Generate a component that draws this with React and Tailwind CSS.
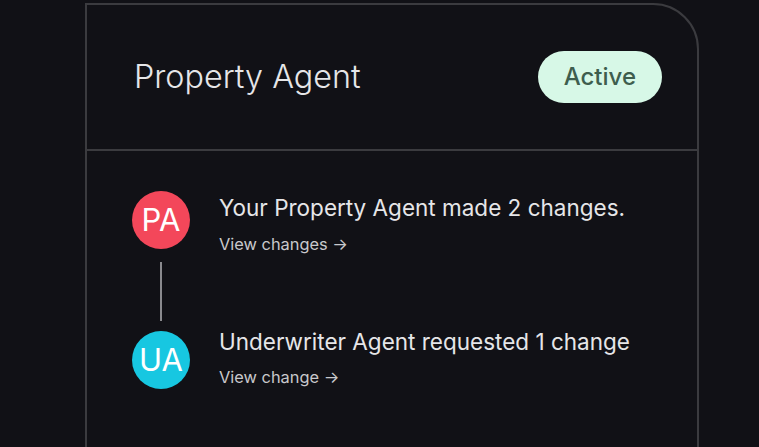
export default function App() {
  return (
    <div
      className="w-[759px] h-[447px] overflow-hidden bg-[#111116] pl-[85px] pt-[3px]"
      style={{ fontFamily: "Inter, 'Noto Sans', sans-serif" }}
    >
      <div className="w-[614px] h-[480px] border-2 border-[#3b3b3f] rounded-tr-[46px] bg-[#111116]">
        <div className="h-[146px] border-b-2 border-[#3b3b3f] flex items-center justify-between pl-[47px] pr-[35px]">
          <div className="text-[32.3px] leading-[36px] text-[#e6e6e8] font-light">
            Property Agent
          </div>
          <div className="h-[52px] px-[26px] rounded-full bg-[#d7f8e7] text-[#3e5e4e] text-[24px] leading-[52px] font-medium">
            Active
          </div>
        </div>
        <div className="flex pl-[45px] pt-[40px]">
          <div className="flex flex-col items-center w-[58px]">
            <div className="w-[58px] h-[58px] rounded-full bg-[#f3475a] flex items-center justify-center text-white text-[31px] font-normal">
              PA
            </div>
            <div className="w-[1.5px] h-[59px] mt-[13px] mb-[10px] bg-[#8a8a8e]" />
            <div className="w-[58px] h-[58px] rounded-full bg-[#17c7e1] flex items-center justify-center text-white text-[31px] font-normal">
              UA
            </div>
          </div>
          <div className="flex flex-col ml-[29px]">
            <div className="mt-[3px]">
              <div className="text-[22.5px] leading-[28px] text-[#e6e6e8]">
                Your Property Agent made 2 changes.
              </div>
              <div className="mt-[10px] text-[16.4px] leading-[24px] text-[#c9c9cc]">
                View changes →
              </div>
            </div>
            <div className="mt-[72px]">
              <div className="text-[22.5px] leading-[28px] text-[#e6e6e8]">
                Underwriter Agent requested 1 change
              </div>
              <div className="mt-[9px] text-[16.4px] leading-[24px] text-[#c9c9cc]">
                View change →
              </div>
            </div>
          </div>
        </div>
      </div>
    </div>
  );
}
